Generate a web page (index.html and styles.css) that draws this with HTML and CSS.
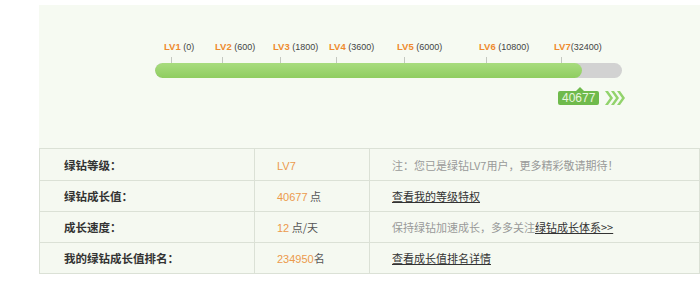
FILE: index.html
```html
<!DOCTYPE html>
<html lang="zh-CN">
<head>
    <meta charset="UTF-8">
    <title>绿钻成长值</title>
    <link rel="stylesheet" href="styles.css">
</head>
<body>
    <div class="wrap">
        <div class="panel">
            <div class="scale">
                <div class="mark" style="left: 16px"><span class="lv">LV1</span> (0)</div>
                <div class="mark" style="left: 67px"><span class="lv">LV2</span> (600)</div>
                <div class="mark" style="left: 125px"><span class="lv">LV3</span> (1800)</div>
                <div class="mark" style="left: 181px"><span class="lv">LV4</span> (3600)</div>
                <div class="mark" style="left: 249px"><span class="lv">LV5</span> (6000)</div>
                <div class="mark" style="left: 331px"><span class="lv">LV6</span> (10800)</div>
                <div class="mark" style="left: 406px"><span class="lv">LV7</span>(32400)</div>
            </div>
            <div class="track">
                <div class="fill" style="width: 427px"></div>
            </div>
            <div class="now">
                <span class="badge">40677</span>
                <svg class="arrows" width="22" height="16" viewBox="0 0 22 16">
                    <path d="M1 1 L6 8 L1 15 L4 15 L9 8 L4 1 Z M7 1 L12 8 L7 15 L10 15 L15 8 L10 1 Z M13 1 L18 8 L13 15 L16 15 L21 8 L16 1 Z" fill="#92d36c"/>
                </svg>
            </div>
        </div>

        <table class="info">
            <tr>
                <th>绿钻等级：</th>
                <td class="val"><span class="num">LV7</span></td>
                <td class="note">注：您已是绿钻LV7用户，更多精彩敬请期待！</td>
            </tr>
            <tr>
                <th>绿钻成长值：</th>
                <td class="val"><span class="num">40677</span> 点</td>
                <td class="note"><a href="#">查看我的等级特权</a></td>
            </tr>
            <tr>
                <th>成长速度：</th>
                <td class="val"><span class="num">12</span> 点/天</td>
                <td class="note">保持绿钻加速成长，多多关注<a href="#">绿钻成长体系&gt;&gt;</a></td>
            </tr>
            <tr>
                <th>我的绿钻成长值排名：</th>
                <td class="val"><span class="num">234950</span>名</td>
                <td class="note"><a href="#">查看成长值排名详情</a></td>
            </tr>
        </table>
    </div>
</body>
</html>
```

FILE: styles.css
```css
body {
    margin: 0;
    background-color: #ffffff;
    font-family: "Noto Sans CJK SC", "DejaVu Sans", sans-serif;
    font-size: 11px;
    color: #333;
}

.wrap {
    padding: 5px 0 0 39px;
}

.panel {
    background-color: #f6faf2;
    height: 143px;
    padding: 36px 0 0 116px;
    box-sizing: border-box;
}

/* level scale above the bar */
.scale {
    position: relative;
    width: 467px;
    height: 22px;
}

.mark {
    position: absolute;
    top: 0;
    margin-left: -7px;
    white-space: nowrap;
    font-family: "Liberation Sans", sans-serif;
    font-size: 9px;
    line-height: 12px;
    color: #444;
}

.mark::after {
    content: "";
    position: absolute;
    left: 7px;
    top: 16px;
    width: 1px;
    height: 6px;
    background-color: #c4c8c0;
}

.lv {
    color: #ee8a2e;
    font-weight: bold;
    font-size: 9.5px;
}

.track {
    width: 467px;
    height: 15px;
    border-radius: 8px;
    background-color: #d2d2d2;
    overflow: hidden;
}

.fill {
    height: 100%;
    border-radius: 8px;
    background: linear-gradient(#a8dc7e, #8fcd60);
}

.now {
    display: flex;
    align-items: center;
    margin: 12px 0 0 403px;
}

.badge {
    position: relative;
    background-color: #6fba4c;
    color: #e8f6de;
    font-family: "Liberation Sans", sans-serif;
    font-size: 12px;
    line-height: 14px;
    padding: 0 4px;
    border-radius: 2px;
}

.badge::before {
    content: "";
    position: absolute;
    left: 18px;
    top: -4px;
    border-left: 4px solid transparent;
    border-right: 4px solid transparent;
    border-bottom: 4px solid #6fba4c;
}

.arrows {
    margin-left: 5px;
}

/* info table */
.info {
    width: 661px;
    border-collapse: collapse;
    background-color: #f5f9f1;
}

.info th,
.info td {
    border: 1px solid #dbe1d6;
    height: 30px;
    padding: 0;
    text-align: left;
}

.info tr:first-child th,
.info tr:first-child td {
    height: 31px;
}

.info th {
    width: 190px;
    padding-left: 24px;
    font-weight: bold;
    font-size: 11.5px;
    color: #333;
}

.info .val {
    width: 92px;
    padding-left: 22px;
    color: #555;
}

.num {
    color: #ec9a4c;
    font-family: "Liberation Sans", sans-serif;
}

.info .note {
    padding-left: 22px;
    color: #999;
}

.note a {
    color: #333;
    text-decoration: underline;
}
```
